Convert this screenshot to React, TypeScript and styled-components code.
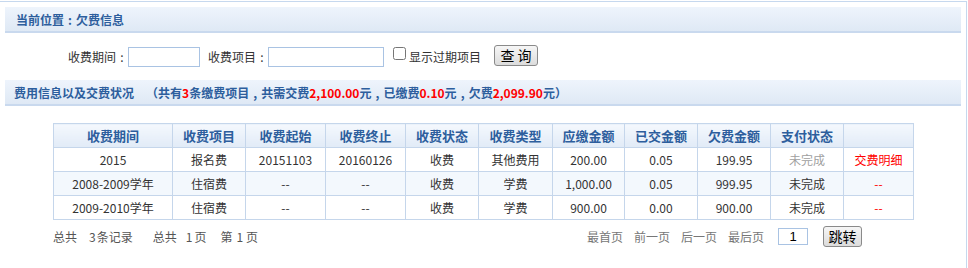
import React from "react";
import styled, { createGlobalStyle } from "styled-components";

const Global = createGlobalStyle`
  html, body { margin: 0; padding: 0; background: #fff; }
  body { font-family: "Noto Sans CJK SC", "Microsoft YaHei", sans-serif; font-size: 12px; color: #333; }
`;

const Frame = styled.div`
  box-sizing: border-box;
  margin-top: 1px;
  width: 967px;
  height: 267px;
  border-top: 1px solid #c6d8ee;
  border-right: 1px solid #c6d8ee;
  padding: 5px 5px 0 5px;
`;

const Bar = styled.div<{ $pad: number }>`
  box-sizing: border-box;
  height: 26px;
  display: flex;
  align-items: center;
  padding-left: ${(p) => p.$pad}px;
  background: linear-gradient(#eef4fc, #dfe9f5);
  border-bottom: 2px solid #c9d9ee;
  color: #2d5e9d;
  font-weight: bold;
  font-size: 12px;
  white-space: pre;
`;

const Punct = styled.span`
  display: inline-block;
  width: 1em;
  text-align: center;
`;

const Red = styled.span`
  color: #f00;
`;

const Summary = styled.span`
  margin-left: 12px;
  font-weight: bold;
`;

const SearchRow = styled.div`
  display: flex;
  align-items: center;
  height: 47px;
  padding-left: 63px;
  color: #333;
  font-size: 12px;
`;

const TextInput = styled.input<{ $w: number }>`
  box-sizing: border-box;
  width: ${(p) => p.$w}px;
  height: 20px;
  border: 1px solid #a9c3e3;
  margin: 0 8px 0 0;
  padding: 0 2px;
  font-size: 12px;
`;

const Check = styled.input`
  width: 13px;
  height: 13px;
  margin: -6px 3px 0 1px;
`;

const Btn = styled.button<{ $w: number }>`
  box-sizing: border-box;
  width: ${(p) => p.$w}px;
  height: 21px;
  padding: 0;
  border: 1px solid #8a8a8a;
  border-radius: 3px;
  background: linear-gradient(#f6f6f6, #dcdcdc);
  color: #000;
  font-family: "Noto Sans CJK SC", sans-serif;
  font-size: 14px;
  line-height: 19px;
`;

const SearchBtn = styled(Btn)`
  margin-left: 13px;
  margin-top: -2px;
`;

const TableWrap = styled.div`
  margin: 17px 0 0 48px;
  width: 860px;
`;

const Table = styled.table`
  border-collapse: collapse;
  table-layout: fixed;
  width: 860px;
  font-size: 12px;
`;

const Th = styled.th`
  height: 23px;
  padding: 0;
  border: 1px solid #c5d6eb;
  background: linear-gradient(#f4f8fd, #e1ebf7);
  color: #2d5e9d;
  font-weight: bold;
  font-size: 13px;
  text-align: center;
`;

const Tr = styled.tr<{ $alt?: boolean }>`
  background: ${(p) => (p.$alt ? "#f3f8fd" : "#fff")};
`;

const Td = styled.td<{ $tone?: "gray" | "red" }>`
  height: 23px;
  padding: 0;
  border: 1px solid #c5d6eb;
  text-align: center;
  color: ${(p) => (p.$tone === "gray" ? "#a0a0a0" : p.$tone === "red" ? "#f00" : "#333")};
`;

const Footer = styled.div`
  display: flex;
  justify-content: space-between;
  align-items: center;
  margin-top: 6px;
  height: 20px;
  color: #555;
  font-size: 12px;
`;

const Stats = styled.div`
  display: flex;
`;

const StatItem = styled.span<{ $gap: number }>`
  margin-left: ${(p) => p.$gap}px;
`;

const Num = styled.span<{ $l: number; $r: number }>`
  margin: 0 ${(p) => p.$r}px 0 ${(p) => p.$l}px;
`;

const Pager = styled.div`
  display: flex;
  align-items: center;
  padding-right: 51px;
`;

const PageLink = styled.span`
  color: #777;
  margin-right: 11px;
`;

const PageInput = styled.input`
  box-sizing: border-box;
  width: 30px;
  height: 17px;
  margin: 0 15px 0 3px;
  border: 1px solid #a9c3e3;
  text-align: center;
  font-size: 13px;
  padding: 0;
`;

const cols = [119, 73, 80, 80, 73, 74, 72, 73, 73, 73, 70];
const heads = ["收费期间", "收费项目", "收费起始", "收费终止", "收费状态", "收费类型", "应缴金额", "已交金额", "欠费金额", "支付状态", ""];

type Row = { cells: string[]; status: string; statusGray?: boolean; action: string };
const rows: Row[] = [
  { cells: ["2015", "报名费", "20151103", "20160126", "收费", "其他费用", "200.00", "0.05", "199.95"], status: "未完成", statusGray: true, action: "交费明细" },
  { cells: ["2008-2009学年", "住宿费", "--", "--", "收费", "学费", "1,000.00", "0.05", "999.95"], status: "未完成", action: "--" },
  { cells: ["2009-2010学年", "住宿费", "--", "--", "收费", "学费", "900.00", "0.00", "900.00"], status: "未完成", action: "--" },
];

export default function App() {
  return (
    <>
      <Global />
      <Frame>
        <Bar $pad={11}>
          当前位置<Punct>:</Punct>欠费信息
        </Bar>
        <SearchRow>
          <span>
            收费期间<Punct>:</Punct>
          </span>
          <TextInput $w={72} />
          <span>
            收费项目<Punct>:</Punct>
          </span>
          <TextInput $w={116} />
          <Check type="checkbox" />
          <span>显示过期项目</span>
          <SearchBtn $w={44}>查 询</SearchBtn>
        </SearchRow>
        <Bar $pad={9}>
          费用信息以及交费状况
          <Summary>
            （共有<Red>3</Red>条缴费项目<Punct>,</Punct>共需交费<Red>2,100.00</Red>元<Punct>,</Punct>已缴费
            <Red>0.10</Red>元<Punct>,</Punct>欠费<Red>2,099.90</Red>元）
          </Summary>
        </Bar>
        <TableWrap>
          <Table>
            <colgroup>
              {cols.map((w, i) => (
                <col key={i} style={{ width: w }} />
              ))}
            </colgroup>
            <thead>
              <tr>
                {heads.map((h, i) => (
                  <Th key={i}>{h}</Th>
                ))}
              </tr>
            </thead>
            <tbody>
              {rows.map((r, i) => (
                <Tr key={i} $alt={i === 1}>
                  {r.cells.map((c, j) => (
                    <Td key={j}>{c}</Td>
                  ))}
                  <Td $tone={r.statusGray ? "gray" : undefined}>{r.status}</Td>
                  <Td $tone="red">{r.action}</Td>
                </Tr>
              ))}
            </tbody>
          </Table>
          <Footer>
            <Stats>
              <StatItem $gap={0}>
                总共<Num $l={12} $r={1}>3</Num>条记录
              </StatItem>
              <StatItem $gap={20}>
                总共<Num $l={9} $r={2}>1</Num>页
              </StatItem>
              <StatItem $gap={14}>
                第<Num $l={4} $r={3}>1</Num>页
              </StatItem>
            </Stats>
            <Pager>
              <PageLink>最首页</PageLink>
              <PageLink>前一页</PageLink>
              <PageLink>后一页</PageLink>
              <PageLink>最后页</PageLink>
              <PageInput defaultValue="1" />
              <Btn $w={39}>跳转</Btn>
            </Pager>
          </Footer>
        </TableWrap>
      </Frame>
    </>
  );
}
